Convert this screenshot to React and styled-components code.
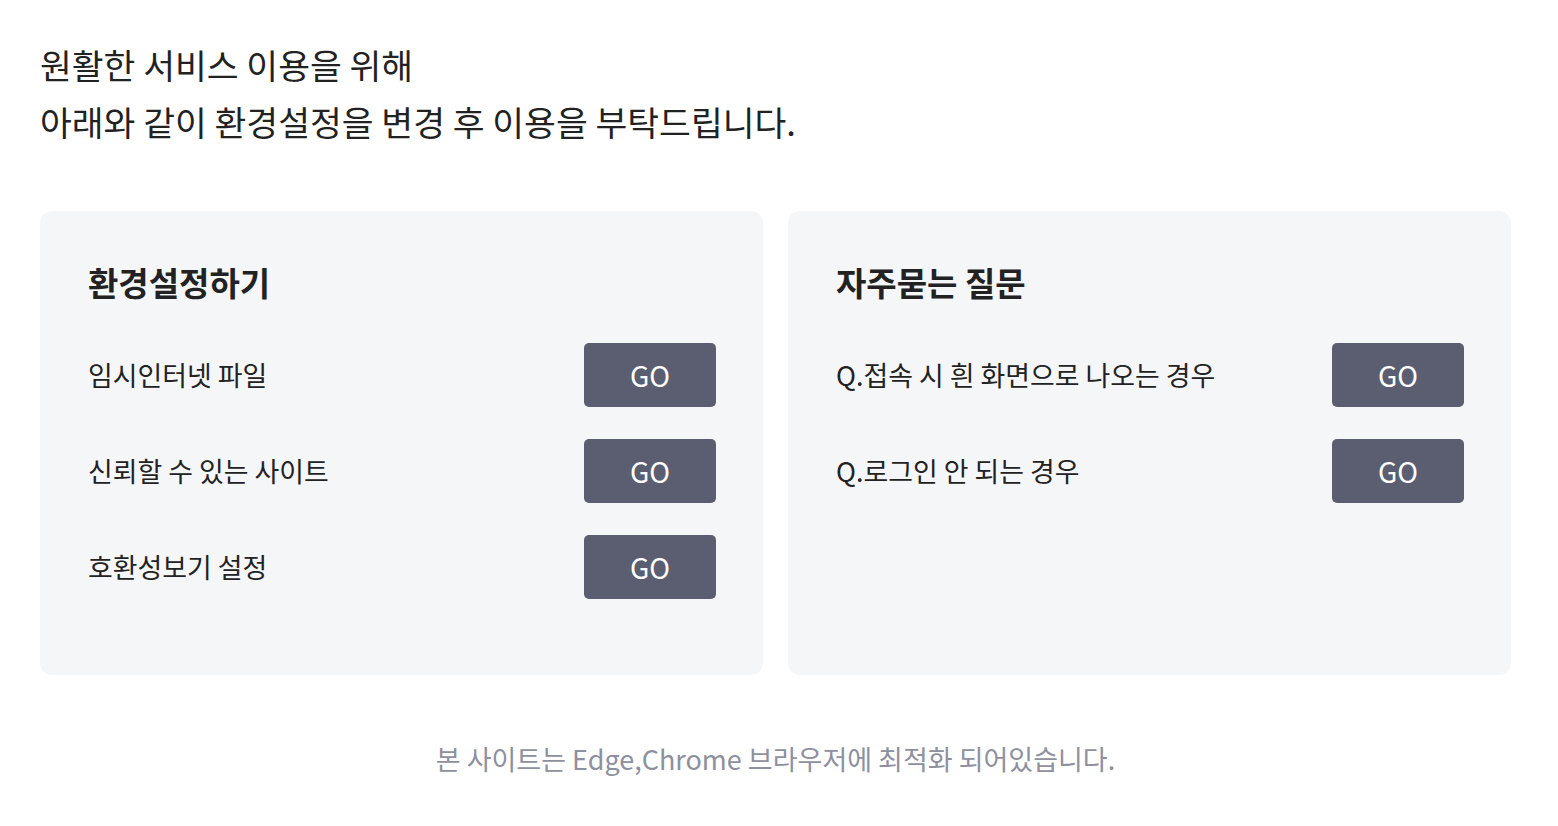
import React from "react";
import styled, { createGlobalStyle } from "styled-components";

const Global = createGlobalStyle`
  html, body { margin: 0; padding: 0; background: #ffffff; }
  body { font-family: "Noto Sans CJK KR", "Noto Sans", sans-serif; color: #222; }
`;

const Page = styled.div`
  width: 1471px;
  padding: 36px 0 0 40px;
`;

const Intro = styled.h1`
  margin: 0;
  font-size: 34.6px;
  font-weight: 400;
  line-height: 57px;
  color: #222;
  letter-spacing: 0;
`;

const Grid = styled.div`
  display: grid;
  grid-template-columns: 1fr 1fr;
  gap: 25px;
  margin-top: 61px;
`;

const Card = styled.section`
  background: #f5f6f8;
  border-radius: 12px;
  padding: 47px 47px 75px 48px;
  height: 464px;
  box-sizing: border-box;
`;

const CardTitle = styled.h2`
  margin: 0 0 37px;
  font-size: 33px;
  font-weight: 700;
  line-height: 48px;
  color: #222;
`;

const List = styled.div`
  display: flex;
  flex-direction: column;
  gap: 32px;
`;

const Row = styled.div`
  display: flex;
  align-items: center;
  justify-content: space-between;
  height: 64px;
`;

const Label = styled.span`
  font-size: 26.9px;
  color: #222;
  line-height: 1;
`;

const GoButton = styled.button`
  width: 132px;
  height: 64px;
  border: none;
  border-radius: 5px;
  background: #5a5e70;
  color: #fff;
  font-family: "Noto Sans CJK KR", "Noto Sans", sans-serif;
  font-size: 28px;
  font-weight: 400;
  cursor: pointer;
  padding: 0;
`;

const Footer = styled.p`
  margin: 64px 0 0;
  text-align: center;
  font-size: 27px;
  line-height: 39px;
  color: #8e909e;
`;

const settings = ["임시인터넷 파일", "신뢰할 수 있는 사이트", "호환성보기 설정"];
const faqs = ["Q.접속 시 흰 화면으로 나오는 경우", "Q.로그인 안 되는 경우"];

export default function App() {
  return (
    <>
      <Global />
      <Page>
        <Intro>
          원활한 서비스 이용을 위해
          <br />
          아래와 같이 환경설정을 변경 후 이용을 부탁드립니다.
        </Intro>
        <Grid>
          <Card>
            <CardTitle>환경설정하기</CardTitle>
            <List>
              {settings.map((s) => (
                <Row key={s}>
                  <Label>{s}</Label>
                  <GoButton>GO</GoButton>
                </Row>
              ))}
            </List>
          </Card>
          <Card>
            <CardTitle>자주묻는 질문</CardTitle>
            <List>
              {faqs.map((s) => (
                <Row key={s}>
                  <Label>{s}</Label>
                  <GoButton>GO</GoButton>
                </Row>
              ))}
            </List>
          </Card>
        </Grid>
        <Footer>본 사이트는 Edge,Chrome 브라우저에 최적화 되어있습니다.</Footer>
      </Page>
    </>
  );
}
